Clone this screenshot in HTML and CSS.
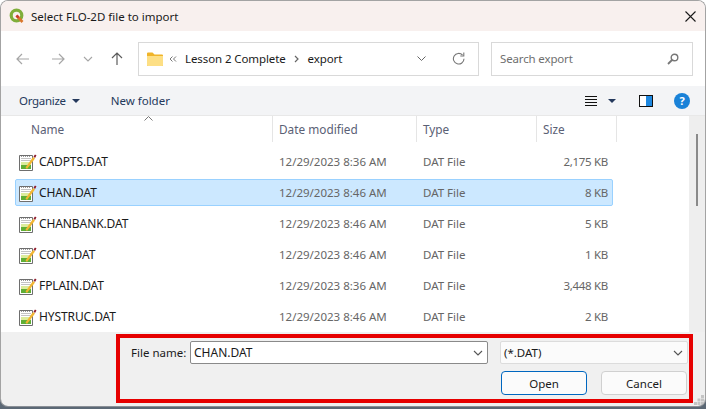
FILE: index.html
```html
<!DOCTYPE html>
<html>
  <head>
    <title>Select FLO-2D file to import</title>
    <link rel="stylesheet" href="styles.css">
  </head>
  <body>
    <div class="window">
      <div class="titlebar">
        <svg class="app-icon" width="16" height="16" viewBox="0 0 16 16">
          <circle cx="7.500" cy="7.500" r="5.300" fill="none" stroke="#7fae3a" stroke-width="3.200"/>
          <path d="M7.500 7.500l6 6.500" stroke="#d9762b" stroke-width="2.600" fill="none"/>
          <path d="M7.500 7.500l2 2.200" stroke="#c8372d" stroke-width="2.600" fill="none"/>
        </svg>
        <span class="title">Select FLO-2D file to import</span>
        <svg class="close" width="11" height="11" viewBox="0 0 11 11">
          <path d="M.5 .5l10 10M10.500 .5l-10 10" stroke="#1a1a1a" stroke-width="1.100" fill="none"/>
        </svg>
      </div>

      <div class="navbar">
        <div class="nav-buttons">
          <svg class="nav-back" width="14" height="12" viewBox="0 0 14 12"><path d="M13 6H1M6 1L1 6l5 5" stroke="#a6a6a6" stroke-width="1.200" fill="none"/></svg>
          <svg class="nav-forward" width="14" height="12" viewBox="0 0 14 12"><path d="M1 6h12M8 1l5 5-5 5" stroke="#a6a6a6" stroke-width="1.200" fill="none"/></svg>
          <svg class="nav-down" width="10" height="6" viewBox="0 0 10 6"><path d="M1 1l4 4 4-4" stroke="#a6a6a6" stroke-width="1.100" fill="none"/></svg>
          <svg class="nav-up" width="12" height="14" viewBox="0 0 12 14"><path d="M6 13V1M1 6l5-5 5 5" stroke="#5c5c5c" stroke-width="1.200" fill="none"/></svg>
        </div>
        <div class="address">
          <svg class="folder" width="16" height="14" viewBox="0 0 16 14">
            <path d="M0 1.500A1 1 0 0 1 1 .5h4.500l2 2H15a1 1 0 0 1 1 1V13a1 1 0 0 1-1 1H1a1 1 0 0 1-1-1z" fill="#f0b429"/>
            <path d="M0 4h16v9a1 1 0 0 1-1 1H1a1 1 0 0 1-1-1z" fill="#fddf85"/>
          </svg>
          <svg class="crumb-more" width="8" height="6" viewBox="0 0 8 6"><path d="M3.500 .5L1 3l2.500 2.500M7 .5L4.500 3 7 5.500" stroke="#777" stroke-width="1" fill="none"/></svg>
          <span class="crumb">Lesson 2 Complete</span>
          <svg class="crumb-sep" width="5" height="8" viewBox="0 0 5 8"><path d="M1 1l3 3-3 3" stroke="#666" stroke-width="1.200" fill="none"/></svg>
          <span class="crumb">export</span>
          <svg class="addr-down" width="9" height="5" viewBox="0 0 9 5"><path d="M.5 .5l4 4 4-4" stroke="#666" stroke-width="1" fill="none"/></svg>
          <svg class="refresh" width="13" height="13" viewBox="0 0 13 13"><path d="M10.500 3A5.300 5.300 0 1 0 12 6.800" stroke="#777" stroke-width="1.100" fill="none"/><path d="M11.800 .5v3.500H8.300" stroke="#777" stroke-width="1.100" fill="none"/></svg>
        </div>
        <div class="search">
          <span>Search export</span>
          <svg width="12" height="12" viewBox="0 0 12 12"><circle cx="7.500" cy="4.500" r="3.300" fill="none" stroke="#777" stroke-width="1.400"/><path d="M5 7l-4 4" stroke="#777" stroke-width="1.800"/></svg>
        </div>
      </div>

      <div class="toolbar">
        <span class="tool-link organize">Organize</span>
        <span class="caret"></span>
        <span class="tool-link new-folder">New folder</span>
        <svg class="view-list" width="12" height="10" viewBox="0 0 12 10"><path d="M0 .5h12M0 3.500h12M0 6.500h12M0 9.500h12" stroke="#111" stroke-width="1" fill="none"/></svg>
        <span class="caret view-caret"></span>
        <div class="pane-icon"><span></span></div>
        <div class="help">?</div>
      </div>

      <div class="browser">
        <div class="list">
          <div class="list-head">
            <div class="col col-name">Name<svg class="sort" width="9" height="5" viewBox="0 0 9 5"><path d="M.5 4.500l4-4 4 4" stroke="#777" stroke-width="1" fill="none"/></svg></div>
            <div class="col col-date">Date modified</div>
            <div class="col col-type">Type</div>
            <div class="col col-size">Size</div>
          </div>
          <div class="rows" id="rows"></div>
        </div>
        <div class="scrollbar"><div class="thumb"></div></div>
      </div>

      <div class="footer">
        <div class="footer-row">
          <label class="name-label">File name:</label>
          <div class="combo name-combo"><span class="name-value">CHAN.DAT</span><svg width="10" height="6" viewBox="0 0 10 6"><path d="M1 1l4 4 4-4" stroke="#555" stroke-width="1.100" fill="none"/></svg></div>
          <div class="combo filter-combo">(*.DAT)<svg width="10" height="6" viewBox="0 0 10 6"><path d="M1 1l4 4 4-4" stroke="#555" stroke-width="1.100" fill="none"/></svg></div>
        </div>
        <div class="footer-row buttons">
          <button class="btn btn-primary">Open</button>
          <button class="btn">Cancel</button>
        </div>
      </div>

      <div class="highlight"></div>
      <svg class="grip" width="10" height="10" viewBox="0 0 10 10">
        <path d="M7 0h3v3H7zM3.500 3.500h3v3h-3zM7 3.500h3v3H7zM0 7h3v3H0zM3.500 7h3v3h-3zM7 7h3v3H7z" fill="#c4c4c4"/>
      </svg>
    </div>

    <script>
      // File rows of the list
      const files = [
        ['CADPTS.DAT', '12/29/2023 8:36 AM', '2,175 KB'],
        ['CHAN.DAT', '12/29/2023 8:46 AM', '8 KB'],
        ['CHANBANK.DAT', '12/29/2023 8:46 AM', '5 KB'],
        ['CONT.DAT', '12/29/2023 8:46 AM', '1 KB'],
        ['FPLAIN.DAT', '12/29/2023 8:36 AM', '3,448 KB'],
        ['HYSTRUC.DAT', '12/29/2023 8:46 AM', '2 KB']
      ];
      const icon = '<svg class="file-icon" width="18" height="18" viewBox="0 0 18 18">' +
        '<path d="M.5 2.500h13v15H.5z" fill="#fff" stroke="#6e6e6e"/>' +
        '<path d="M2 3.500h10" stroke="#999" stroke-dasharray="1 1"/>' +
        '<path d="M2 5.500h10M2 7.500h10" stroke="#c4c4c4"/>' +
        '<rect x="2" y="9" width="10" height="7" fill="#5fae35"/>' +
        '<rect x="2" y="9" width="10" height="3" fill="#dcec9c"/>' +
        '<path d="M6.500 14.500L14 4l2 1.500L8 16z" fill="#f2b632"/>' +
        '<path d="M14.500 3.500l1.500-2 1.500 1-1.500 2.500z" fill="#8e1c2c"/>' +
        '</svg>';
      document.getElementById('rows').innerHTML = files.map((f, i) =>
        '<div class="row' + (i === 1 ? ' selected' : '') + '">' +
        '<div class="cell-name">' + icon + '<span>' + f[0] + '</span></div>' +
        '<div class="cell-date">' + f[1] + '</div>' +
        '<div class="cell-type">DAT File</div>' +
        '<div class="cell-size">' + f[2] + '</div>' +
        '</div>').join('');
    </script>
  </body>
</html>
```

FILE: styles.css
```css
html, body {
  margin: 0;
  height: 100%;
  overflow: hidden;
}

/* Desktop behind the dialog, only seen at the lower edge */
body {
  background: linear-gradient(#fff 390px, #5b6875 390px);
}

.window {
  position: relative;
  box-sizing: border-box;
  width: 706px;
  height: 407px;
  display: flex;
  flex-direction: column;
  border: 1px solid #a3a3a3;
  border-bottom-color: #8a8f96;
  border-radius: 8px;
  overflow: hidden;
  font-family: "Noto Sans", "Open Sans", sans-serif;
  font-size: 11.5px;
  color: #1a1a1a;
}

/* Title bar */
.titlebar {
  height: 30px;
  flex: none;
  display: flex;
  align-items: center;
  padding-left: 8px;
  background: #f8f0ee;
}

.app-icon {
  margin-right: 6px;
}

.title {
  flex: 1;
}

.close {
  margin-right: 9px;
}

/* Navigation row */
.navbar {
  height: 55px;
  flex: none;
  display: flex;
  align-items: center;
  background: #fff;
}

.nav-buttons {
  width: 137px;
  display: flex;
  align-items: center;
  padding-left: 15px;
  box-sizing: border-box;
}

.nav-forward {
  margin-left: 21px;
}

.nav-down {
  margin-left: 18px;
}

.nav-up {
  margin-left: 18px;
}

.address, .search {
  height: 34px;
  box-sizing: border-box;
  display: flex;
  align-items: center;
  border: 1px solid #d9d9d9;
  background: #fff;
}

.address {
  width: 341px;
  padding-left: 8px;
}

.crumb {
  letter-spacing: -0.1px;
}

.crumb-more {
  margin: 0 8px 0 6px;
}

.crumb-sep {
  margin: 0 9px 0 8px;
}

.addr-down {
  margin-left: auto;
}

.refresh {
  margin: 0 13px 0 26px;
}

.search {
  width: 202px;
  margin-left: 12px;
  padding: 0 13px 0 8px;
  justify-content: space-between;
  color: #6f6f6f;
  letter-spacing: -0.15px;
}

/* Toolbar */
.toolbar {
  height: 30px;
  flex: none;
  display: flex;
  align-items: center;
  padding-left: 18px;
  background: #f3f4f6;
  border-bottom: 1px solid #e8e8e8;
  box-sizing: border-box;
}

.tool-link {
  color: #24395c;
}

.organize {
  letter-spacing: -0.3px;
}

.caret {
  width: 0;
  height: 0;
  margin-left: 6px;
  border-left: 4px solid transparent;
  border-right: 4px solid transparent;
  border-top: 4px solid #24395c;
}

.new-folder {
  margin-left: 31px;
}

.view-list {
  margin-left: auto;
}

.view-caret {
  margin-left: 11px;
}

.pane-icon {
  width: 14px;
  height: 12px;
  box-sizing: border-box;
  margin-left: 23px;
  border: 1px solid #111;
  background: #fff;
}

.pane-icon span {
  display: block;
  width: 6px;
  height: 10px;
  margin-left: 6px;
  background: #1e88e0;
}

.help {
  width: 16px;
  height: 16px;
  margin: 0 15px 0 21px;
  border-radius: 50%;
  background: #1a82d8;
  color: #fff;
  font-size: 11px;
  font-weight: bold;
  line-height: 16px;
  text-align: center;
}

/* File list */
.browser {
  flex: 1;
  min-height: 0;
  display: flex;
}

.list {
  width: 688px;
  background: #fff;
  overflow: hidden;
}

.list-head {
  height: 26px;
  display: flex;
  font-size: 11.8px;
  color: #5a6075;
}

.col {
  box-sizing: border-box;
  padding-left: 7px;
  line-height: 27px;
  border-right: 1px solid #e5e5e5;
}

.col-name {
  position: relative;
  width: 272px;
  padding-left: 30px;
}

.sort {
  position: absolute;
  left: 143px;
  top: 0;
}

.col-date {
  width: 144px;
  padding-left: 6px;
}

.col-type {
  width: 120px;
  padding-left: 6px;
}

.col-size {
  width: 80px;
  padding-left: 6px;
}

.rows {
  padding-top: 6px;
}

.row {
  box-sizing: border-box;
  width: 598px;
  height: 27px;
  margin: 0 0 4px 14px;
  display: flex;
  align-items: center;
  border: 1px solid transparent;
  color: #666;
}

.row.selected {
  background: #cce8ff;
  border-color: #99d1ff;
  border-radius: 2px;
}

.cell-name {
  width: 263px;
  display: flex;
  align-items: center;
  font-size: 12px;
  letter-spacing: -0.1px;
  color: #1a1a1a;
}

.file-icon {
  margin: 0 2px 0 3px;
}

.cell-date {
  width: 144px;
}

.cell-type {
  width: 100px;
}

.cell-size {
  width: 85px;
  text-align: right;
  letter-spacing: -0.3px;
}

.scrollbar {
  flex: 1;
  background: #eeeeee;
}

.thumb {
  width: 2px;
  height: 72px;
  margin: 18px 0 0 7px;
  background: #8a8a8a;
}

/* Bottom part with file name and buttons */
.footer {
  height: 74px;
  flex: none;
  box-sizing: border-box;
  padding-top: 9px;
  background: #f0f0f0;
}

.footer-row {
  display: flex;
  align-items: center;
}

.name-label {
  margin-left: 130px;
  width: 59px;
}

.combo {
  box-sizing: border-box;
  height: 23px;
  display: flex;
  align-items: center;
  justify-content: space-between;
  padding: 0 4px 0 3px;
}

.name-value {
  font-size: 12px;
}

.name-combo {
  width: 298px;
  background: #fff;
  border: 1px solid #8a8a8a;
  border-radius: 2px;
}

.filter-combo {
  width: 188px;
  margin-left: 12px;
  background: #fbfbfb;
  border: 1px solid #dcdcdc;
  border-radius: 2px;
}

.buttons {
  margin-top: 7px;
  padding-left: 500px;
  gap: 14px;
}

.btn {
  box-sizing: border-box;
  width: 86px;
  height: 24px;
  padding: 0;
  font: inherit;
  color: #1a1a1a;
  background: #fbfbfb;
  border: 1px solid #d0d0d0;
  border-radius: 4px;
}

.btn-primary {
  border-color: #0067c0;
}

/* Red annotation over the dialog */
.highlight {
  position: absolute;
  left: 115px;
  top: 333px;
  width: 577px;
  height: 69px;
  box-sizing: border-box;
  border: 4px solid #e60000;
}

.grip {
  position: absolute;
  right: 1px;
  bottom: 1px;
}
```
